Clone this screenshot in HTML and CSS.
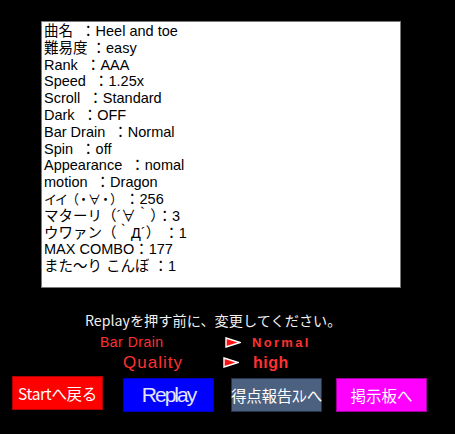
FILE: index.html
```html
<!DOCTYPE html>
<html lang="ja">
<head>
<meta charset="utf-8">
<title>Result</title>
<link rel="stylesheet" href="styles.css">
</head>
<body>
<main class="page">
  <section class="panel">
    <div class="line">曲名  ：Heel and toe</div>
    <div class="line">難易度 ：easy</div>
    <div class="line">Rank  ：AAA</div>
    <div class="line">Speed  ：1.25x</div>
    <div class="line">Scroll  ：Standard</div>
    <div class="line">Dark  ：OFF</div>
    <div class="line">Bar Drain  ：Normal</div>
    <div class="line">Spin  ：off</div>
    <div class="line">Appearance  ：nomal</div>
    <div class="line">motion  ：Dragon</div>
    <div class="line"><span class="tight">イイ（・∀・）</span> ：256</div>
    <div class="line">マターリ（´∀｀）：3</div>
    <div class="line">ウワァン（｀Д´） ：1</div>
    <div class="line">MAX COMBO：177</div>
    <div class="line">また〜り こんぼ ：1</div>
  </section>

  <p class="notice">Replayを押す前に、変更してください。</p>

  <div class="opt opt-drain">
    <span class="opt-label">Bar Drain</span>
    <svg class="arrow" width="16" height="11" viewBox="0 0 16 11"><polygon points="1,1 15,5.5 1,10" fill="#ff1010" stroke="#ffffff" stroke-width="1.4"/></svg>
    <span class="opt-value">Normal</span>
  </div>
  <div class="opt opt-quality">
    <span class="opt-label">Quality</span>
    <svg class="arrow" width="16" height="11" viewBox="0 0 16 11"><polygon points="1,1 15,5.5 1,10" fill="#ff1010" stroke="#ffffff" stroke-width="1.4"/></svg>
    <span class="opt-value">high</span>
  </div>

  <nav class="buttons">
    <div class="btn btn-start">Startへ戻る</div>
    <div class="btn btn-replay">Replay</div>
    <div class="btn btn-report">得点報告ｽﾚへ</div>
    <div class="btn btn-board">掲示板へ</div>
  </nav>
</main>
</body>
</html>
```

FILE: styles.css
```css
html, body {
  margin: 0;
  padding: 0;
  background: #000;
}

.page {
  width: 455px;
  height: 434px;
  padding-top: 21px;
  box-sizing: border-box;
  overflow: hidden;
}

.panel {
  margin-left: 41px;
  width: 360px;
  height: 267px;
  box-sizing: border-box;
  border: 1px solid #7a7a7a;
  background: #fff;
  padding: 1px 2px;
  color: #000;
  font-family: "Liberation Sans", "Noto Sans CJK JP", sans-serif;
  font-size: 14.5px;
}

.line {
  height: 16.8px;
  line-height: 16.8px;
  white-space: pre;
}

.tight {
  font-size: 13px;
  letter-spacing: -2px;
}

.notice {
  margin: 23px 0 0 85px;
  height: 19px;
  line-height: 19px;
  font-family: "Noto Sans CJK JP", sans-serif;
  font-size: 14.2px;
  color: #f0f0f0;
  white-space: nowrap;
}

.opt {
  display: flex;
  align-items: center;
  color: #ff3030;
  font-family: "Liberation Sans", sans-serif;
  white-space: nowrap;
}

.opt-drain {
  height: 20px;
  margin-top: 2px;
  padding-left: 100px;
}

.opt-drain .opt-label {
  width: 125px;
  font-size: 14px;
  letter-spacing: 0.5px;
}

.opt-drain .opt-value {
  margin-left: 11px;
  font-size: 13px;
  font-weight: bold;
  letter-spacing: 2.3px;
}

.opt-quality {
  height: 21px;
  padding-left: 123px;
}

.opt-quality .opt-label {
  width: 100px;
  font-size: 17px;
  letter-spacing: 1px;
}

.opt-quality .opt-value {
  margin-left: 14px;
  font-size: 16px;
  font-weight: bold;
  letter-spacing: 0.5px;
}

.arrow {
  display: block;
  flex: none;
}

.buttons {
  display: flex;
  align-items: flex-start;
  margin-top: 3px;
  padding-left: 12px;
}

.btn {
  width: 91px;
  height: 34px;
  box-sizing: border-box;
  display: flex;
  align-items: center;
  justify-content: center;
  font-family: "Noto Sans CJK JP", sans-serif;
  font-size: 15.5px;
  line-height: 20px;
  color: #fff;
  white-space: nowrap;
}

.btn-start {
  background: #ff0000;
  border: 1px solid #b00000;
  letter-spacing: -0.3px;
}

.btn-replay {
  margin-left: 20px;
  margin-top: 2px;
  background: #0000ff;
  border: 1px solid #0000c0;
  color: #e4e4ff;
  font-family: "Liberation Sans", sans-serif;
  font-size: 21px;
  letter-spacing: -2px;
}

.btn-report {
  margin-left: 17px;
  margin-top: 2px;
  background: #4c6080;
  border: 1px solid #24324a;
  letter-spacing: -0.3px;
}

.btn-board {
  margin-left: 14px;
  margin-top: 2px;
  background: #ff00ff;
  border: 1px solid #a000a0;
}
```
